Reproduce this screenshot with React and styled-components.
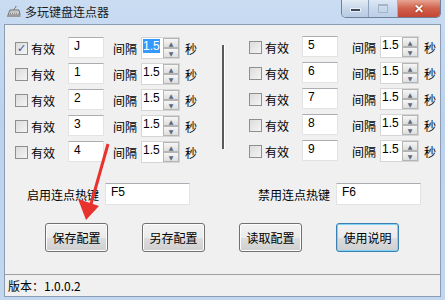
import styled, { createGlobalStyle } from "styled-components";

const GlobalStyle = createGlobalStyle`
  html, body {
    margin: 0;
    padding: 0;
    width: 445px;
    height: 300px;
    overflow: hidden;
  }
  body {
    font-family: "Liberation Sans", "Noto Sans CJK SC", sans-serif;
    font-size: 12px;
    color: #000;
  }
`;

const leftRows = ["J", "1", "2", "3", "4"];
const rightRows = ["5", "6", "7", "8", "9"];

const KeyboardIcon = () => (
  <svg width="15" height="12" viewBox="0 0 15 12">
    <path d="M2 9 L4 4 L13 4 L14 9 Z" fill="#d8d8d8" stroke="#707070" />
    <path d="M4.5 6 H12 M4 7.5 H12.5" stroke="#8a8a8a" strokeDasharray="1 1" />
    <path d="M8 4 C8 2 10 2 10 0" stroke="#707070" fill="none" />
    <rect x="1" y="9" width="13.5" height="2" fill="#9a9a9a" />
  </svg>
);

const Arrow = () => (
  <svg width="445" height="300" viewBox="0 0 445 300">
    <path d="M108 144 L91 204" stroke="#e8322e" strokeWidth="3" fill="none" />
    <polygon points="78,199 99,206 86,220" fill="#e8322e" />
  </svg>
);

const Row = ({ value, gap, checked, selected }) => (
  <RowBox>
    <CheckBox checked={checked}>{checked && "✓"}</CheckBox>
    <CheckText>有效</CheckText>
    <TextBox>{value}</TextBox>
    <Label gap={gap}>间隔</Label>
    <Spin>
      <SpinValue>{selected ? <Selected>1.5</Selected> : "1.5"}</SpinValue>
      <SpinButtons>
        <SpinBtn>▲</SpinBtn>
        <SpinBtn>▼</SpinBtn>
      </SpinButtons>
    </Spin>
    <Unit>秒</Unit>
  </RowBox>
);

const App = () => {
  return (
    <>
      <GlobalStyle />
      <Window>
        <TitleBar>
          <KeyboardIcon />
          <Title>多玩键盘连点器</Title>
          <Controls>
            <MinBtn>
              <Dash />
            </MinBtn>
            <MaxBtn>
              <Square />
            </MaxBtn>
            <CloseBtn>✕</CloseBtn>
          </Controls>
        </TitleBar>
        <Client>
          <Main>
            <Panel>
              {leftRows.map((v, i) => (
                <Row key={v} value={v} gap={9} checked={i === 0} selected={i === 0} />
              ))}
            </Panel>
            <Separator />
            <Panel right>
              {rightRows.map((v) => (
                <Row key={v} value={v} gap={14} />
              ))}
            </Panel>
          </Main>
          <HotkeyRow>
            <HotkeyLabel>启用连点热键</HotkeyLabel>
            <HotkeyBox>F5</HotkeyBox>
            <HotkeyLabel second>禁用连点热键</HotkeyLabel>
            <HotkeyBox>F6</HotkeyBox>
          </HotkeyRow>
          <ButtonRow>
            <Button>保存配置</Button>
            <Button>另存配置</Button>
            <Button>读取配置</Button>
            <Button focused>使用说明</Button>
          </ButtonRow>
          <StatusBar>版本：1.0.0.2</StatusBar>
        </Client>
        <ArrowLayer>
          <Arrow />
        </ArrowLayer>
      </Window>
    </>
  );
};

const Window = styled.div`
  position: relative;
  width: 445px;
  height: 300px;
  box-sizing: border-box;
  padding: 0 4px 3px 4px;
  display: flex;
  flex-direction: column;
  background: linear-gradient(180deg, #c9dcf2 0%, #bcd2ec 40%, #c3d7ef 100%);
`;

const TitleBar = styled.div`
  height: 24px;
  display: flex;
  align-items: center;
  padding-left: 2px;
  gap: 4px;
`;

const Title = styled.div`
  font-family: "Noto Sans CJK SC", sans-serif;
  font-size: 12px;
  color: #1a1a1a;
  margin-top: -1px;
`;

const Controls = styled.div`
  margin-left: auto;
  align-self: flex-start;
  display: flex;
  height: 17px;
  border: 1px solid #6f7f95;
  border-top: none;
  border-radius: 0 0 5px 5px;
  overflow: hidden;
`;

const MinBtn = styled.div`
  width: 26px;
  display: flex;
  align-items: center;
  justify-content: center;
  background: linear-gradient(180deg, #e4ecf6 0%, #c8d7ea 50%, #b7cbe4 100%);
  border-right: 1px solid #8ea2bb;
`;

const Dash = styled.div`
  width: 9px;
  height: 2px;
  margin-top: 3px;
  background: #3b4a5e;
  border: 1px solid #e8eef6;
`;

const MaxBtn = styled(MinBtn)`
  width: 28px;
  opacity: 0.75;
`;

const Square = styled.div`
  width: 8px;
  height: 6px;
  border: 1px solid #9aa8ba;
  border-top-width: 2px;
`;

const CloseBtn = styled.div`
  width: 42px;
  display: flex;
  align-items: center;
  justify-content: center;
  color: #fff;
  font-size: 12px;
  font-weight: bold;
  background: linear-gradient(180deg, #e8a493 0%, #d0604c 50%, #c44534 100%);
  text-shadow: 0 0 2px #7a1e12;
`;

const Client = styled.div`
  flex: 1;
  display: flex;
  flex-direction: column;
  background: #f0f0f0;
  border: 1px solid #8a9db5;
`;

const Main = styled.div`
  display: flex;
  padding: 12px 0 0 10px;
`;

const Panel = styled.div`
  width: ${(p) => (p.right ? "186px" : "180px")};
  flex-shrink: 0;
  display: flex;
  flex-direction: column;
  gap: 4px;
  margin-top: ${(p) => (p.right ? "-1px" : "0")};
`;

const Separator = styled.div`
  flex-shrink: 0;
  width: 2px;
  height: 104px;
  margin: 8px 24px 0 27px;
  background: #5a5a5a;
  border-right: 1px solid #fff;
`;

const RowBox = styled.div`
  height: 22px;
  display: flex;
  align-items: center;
  white-space: nowrap;
`;

const CheckBox = styled.div`
  flex-shrink: 0;
  width: 11px;
  height: 11px;
  border: 1px solid #8e8f8f;
  background: linear-gradient(135deg, #dcdcdc 0%, #f4f4f4 100%);
  margin-right: 3px;
  display: flex;
  align-items: center;
  justify-content: center;
  font-size: 11px;
  line-height: 11px;
  color: #3a4fa0;
  font-family: "DejaVu Sans", sans-serif;
  font-weight: bold;
`;

const CheckText = styled.div`
  flex-shrink: 0;
  width: 37px;
  font-family: "Noto Sans CJK SC", sans-serif;
  font-size: 12px;
`;

const TextBox = styled.div`
  flex-shrink: 0;
  width: 36px;
  height: 21px;
  box-sizing: border-box;
  background: #fff;
  border: 1px solid #e3e3e3;
  border-top-color: #abadb3;
  padding: 1px 0 0 5px;
  font-size: 12px;
  align-self: flex-start;
`;

const Label = styled.div`
  flex-shrink: 0;
  margin-left: ${(p) => p.gap}px;
  width: 24px;
  font-family: "Noto Sans CJK SC", sans-serif;
  font-size: 12px;
`;

const Spin = styled.div`
  flex-shrink: 0;
  margin-left: 4px;
  width: 39px;
  height: 22px;
  box-sizing: border-box;
  display: flex;
  background: #fff;
  border: 1px solid #d5d5d5;
`;

const SpinValue = styled.div`
  flex: 1;
  padding: 1px 0 0 1px;
  font-size: 12px;
`;

const Selected = styled.span`
  background: #3399ff;
  color: #fff;
`;

const SpinButtons = styled.div`
  width: 16px;
  display: flex;
  flex-direction: column;
`;

const SpinBtn = styled.div`
  flex: 1;
  display: flex;
  align-items: center;
  justify-content: center;
  font-size: 6px;
  color: #5a6a80;
  border: 1px solid #b5b5b5;
  background: linear-gradient(180deg, #f6f6f6 0%, #dedede 100%);
  font-family: "DejaVu Sans", sans-serif;
`;

const Unit = styled.div`
  flex-shrink: 0;
  margin-left: 5px;
  width: 12px;
  font-family: "Noto Sans CJK SC", sans-serif;
  font-size: 12px;
`;

const HotkeyRow = styled.div`
  display: flex;
  align-items: center;
  margin-top: 20px;
  padding-left: 22px;
`;

const HotkeyLabel = styled.div`
  width: 72px;
  margin-left: ${(p) => (p.second ? "68px" : "0")};
  margin-right: 6px;
  font-family: "Noto Sans CJK SC", sans-serif;
  font-size: 12px;
`;

const HotkeyBox = styled(TextBox)`
  width: 85px;
  height: 22px;
  align-self: center;
`;

const ButtonRow = styled.div`
  display: flex;
  gap: 34px;
  margin-top: 18px;
  padding-left: 40px;
`;

const Button = styled.div`
  width: 63px;
  height: 29px;
  box-sizing: border-box;
  display: flex;
  align-items: center;
  justify-content: center;
  font-family: "Noto Sans CJK SC", sans-serif;
  font-size: 12px;
  border-radius: 3px;
  border: 1px solid ${(p) => (p.focused ? "#3c7fb1" : "#707070")};
  box-shadow: ${(p) =>
    p.focused ? "inset 0 0 0 1px #7fd3f7" : "inset 0 0 0 1px #fcfcfc"};
  background: linear-gradient(180deg, #f2f2f2 0%, #ebebeb 50%, #dddddd 51%, #cfcfcf 100%);
`;

const StatusBar = styled.div`
  margin-top: auto;
  height: 21px;
  border-top: 1px solid #a0a0a0;
  display: flex;
  align-items: center;
  padding-left: 3px;
  font-family: "Noto Sans CJK SC", sans-serif;
  font-size: 12px;
`;

const ArrowLayer = styled.div`
  position: absolute;
  left: 0;
  top: 0;
  pointer-events: none;
`;

export default App;
